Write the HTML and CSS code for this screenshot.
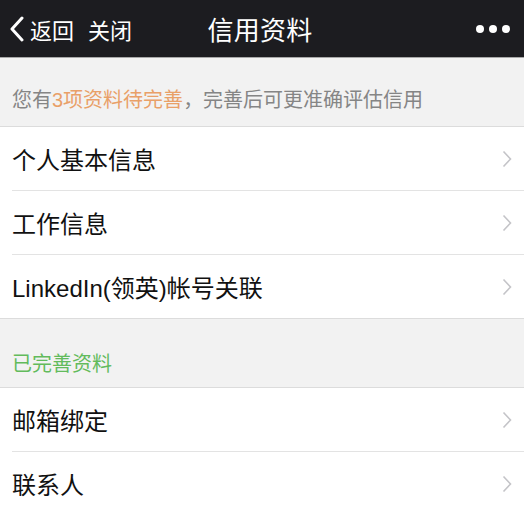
FILE: index.html
```html
<!DOCTYPE html>
<html lang="zh-CN">
<head>
    <meta charset="UTF-8">
    <meta name="viewport" content="width=device-width, initial-scale=1.0">
    <title>信用资料</title>
    <link rel="stylesheet" href="styles.css">
</head>
<body>
    <div class="navbar">
        <div class="nav-left">
            <a href="javascript:void(0)" class="back">
                <svg class="back-icon" width="16" height="26" viewBox="0 0 16 26">
                    <path d="M13 2 L3 13 L13 24" fill="none" stroke="#fff" stroke-width="3" stroke-linecap="round" stroke-linejoin="round"/>
                </svg>
                <span>返回</span>
            </a>
            <a href="javascript:void(0)" class="close">关闭</a>
        </div>
        <div class="nav-title">信用资料</div>
        <div class="nav-right">
            <span class="dot"></span><span class="dot"></span><span class="dot"></span>
        </div>
    </div>

    <div class="section-head">
        您有<span class="orange">3项资料待完善</span>，完善后可更准确评估信用
    </div>
    <div class="list">
        <a href="javascript:void(0)" class="item">
            <span>个人基本信息</span>
            <svg class="arrow" width="10" height="18" viewBox="0 0 10 18"><path d="M1.5 1.5 L8.5 9 L1.5 16.5" fill="none" stroke="#c4c4c8" stroke-width="1.6"/></svg>
        </a>
        <a href="javascript:void(0)" class="item">
            <span>工作信息</span>
            <svg class="arrow" width="10" height="18" viewBox="0 0 10 18"><path d="M1.5 1.5 L8.5 9 L1.5 16.5" fill="none" stroke="#c4c4c8" stroke-width="1.6"/></svg>
        </a>
        <a href="javascript:void(0)" class="item">
            <span>LinkedIn(领英)帐号关联</span>
            <svg class="arrow" width="10" height="18" viewBox="0 0 10 18"><path d="M1.5 1.5 L8.5 9 L1.5 16.5" fill="none" stroke="#c4c4c8" stroke-width="1.6"/></svg>
        </a>
    </div>

    <div class="section-head green">已完善资料</div>
    <div class="list">
        <a href="javascript:void(0)" class="item">
            <span>邮箱绑定</span>
            <svg class="arrow" width="10" height="18" viewBox="0 0 10 18"><path d="M1.5 1.5 L8.5 9 L1.5 16.5" fill="none" stroke="#c4c4c8" stroke-width="1.6"/></svg>
        </a>
        <a href="javascript:void(0)" class="item">
            <span>联系人</span>
            <svg class="arrow" width="10" height="18" viewBox="0 0 10 18"><path d="M1.5 1.5 L8.5 9 L1.5 16.5" fill="none" stroke="#c4c4c8" stroke-width="1.6"/></svg>
        </a>
    </div>
</body>
</html>
```

FILE: styles.css
```css
body {
    margin: 0;
    font-family: "Liberation Sans", "Noto Sans CJK SC", sans-serif;
    background-color: #f2f2f2;
    overflow: hidden;
}
a {
    text-decoration: none;
    color: inherit;
}
.navbar {
    display: grid;
    grid-template-columns: 1fr auto 1fr;
    align-items: center;
    height: 57px;
    background-color: #1c1c20;
    border-bottom: 1px solid #a8a8a8;
    color: #ffffff;
}
.nav-left {
    display: flex;
    align-items: center;
    padding-left: 9px;
    font-size: 22px;
}
.back {
    display: flex;
    align-items: center;
}
.back-icon {
    margin-right: 5px;
}
.close {
    margin-left: 14px;
}
.nav-title {
    font-size: 26px;
    letter-spacing: 0.3px;
    margin-left: -4px;
}
.nav-right {
    display: flex;
    justify-content: flex-end;
    gap: 5px;
    padding-right: 14px;
}
.dot {
    width: 8px;
    height: 8px;
    border-radius: 50%;
    background-color: #ffffff;
}
.section-head {
    height: 68px;
    display: flex;
    align-items: flex-end;
    padding: 0 12px 13px;
    box-sizing: border-box;
    font-size: 20px;
    color: #858585;
}
.section-head.green {
    padding-bottom: 10px;
    color: #62bb5c;
}
.orange {
    color: #e9a068;
}
.list {
    background-color: #ffffff;
    border-top: 1px solid #dcdcdc;
    border-bottom: 1px solid #dcdcdc;
    padding-left: 12px;
}
.item {
    display: flex;
    align-items: center;
    justify-content: space-between;
    height: 63px;
    padding-right: 12px;
    font-size: 24px;
    color: #111111;
    border-bottom: 1px solid #e3e3e3;
}
.item:last-child {
    border-bottom: none;
}
.arrow {
    flex-shrink: 0;
}
```
